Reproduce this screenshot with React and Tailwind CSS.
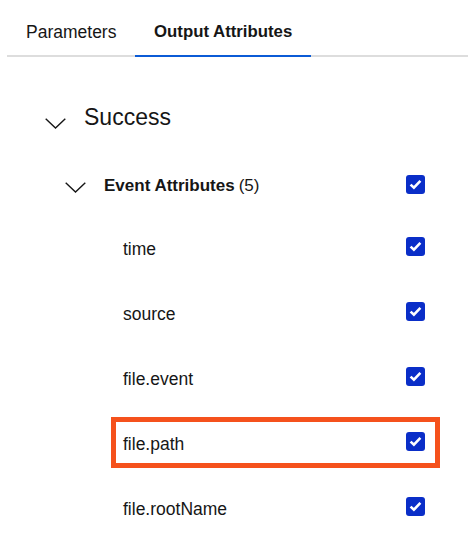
import React from "react";

function Chevron() {
    return (
        <svg width="21" height="11" viewBox="0 0 21 11" fill="none">
            <path d="M0.7 0.7 L10.5 10 L20.3 0.7" stroke="#161616" strokeWidth="1.4" />
        </svg>
    );
}

function Checkbox() {
    return (
        <div className="w-[19px] h-[19px] rounded-[3px] bg-[#0a2ec8] flex items-center justify-center shrink-0">
            <svg width="13" height="11" viewBox="0 0 13 11" fill="none">
                <path d="M1.6 5.6 L4.9 8.7 L11.4 1.9" stroke="#ffffff" strokeWidth="2.6" />
            </svg>
        </div>
    );
}

const attributes = [
    { name: "time" },
    { name: "source" },
    { name: "file.event" },
    { name: "file.path", highlight: true },
    { name: "file.rootName" },
];

export default function App() {
    return (
        <div className="w-[468px] h-[538px] bg-white overflow-hidden text-[#161616] font-['Liberation_Sans',Arial,sans-serif]">
            {/* Tabs */}
            <div className="ml-[7px] flex border-b-2 border-[#dddddd] h-[57px]">
                <div className="w-[128px] pl-[19px] flex items-center text-[17.5px] pt-[9px]">Parameters</div>
                <div className="w-[176px] pl-[19px] flex items-center text-[16.8px] font-bold border-b-2 border-[#0b5bd6] -mb-[2px] pt-[9px]">
                    Output Attributes
                </div>
            </div>

            {/* Success group */}
            <div className="mt-[46px] ml-[45px] flex items-center h-[28px]">
                <div className="mt-[12px]">
                    <Chevron />
                </div>
                <span className="ml-[18px] text-[23px]">Success</span>
            </div>

            {/* Event attributes header */}
            <div className="mt-[29px] h-[51px] ml-[65px] w-[375px] flex items-center pr-[15px]">
                <div className="mt-[3px]">
                    <Chevron />
                </div>
                <span className="ml-[18px] text-[17px] font-bold">Event Attributes</span>
                <span className="ml-[4px] text-[17px]">(5)</span>
                <div className="ml-auto -mt-[2px]">
                    <Checkbox />
                </div>
            </div>

            {/* Attribute rows */}
            <div className="mt-[11px] flex flex-col gap-[14px]">
                {attributes.map((attr) => (
                    <div
                        key={attr.name}
                        className={
                            "ml-[111px] w-[329px] h-[51px] flex items-center pl-[7px] pr-[10px] border-[5px] " +
                            (attr.highlight ? "border-[#f5511c]" : "border-transparent")
                        }
                    >
                        <span className="text-[17.5px] mt-[4px]">{attr.name}</span>
                        <div className="ml-auto -mt-[2px]">
                            <Checkbox />
                        </div>
                    </div>
                ))}
            </div>
        </div>
    );
}
